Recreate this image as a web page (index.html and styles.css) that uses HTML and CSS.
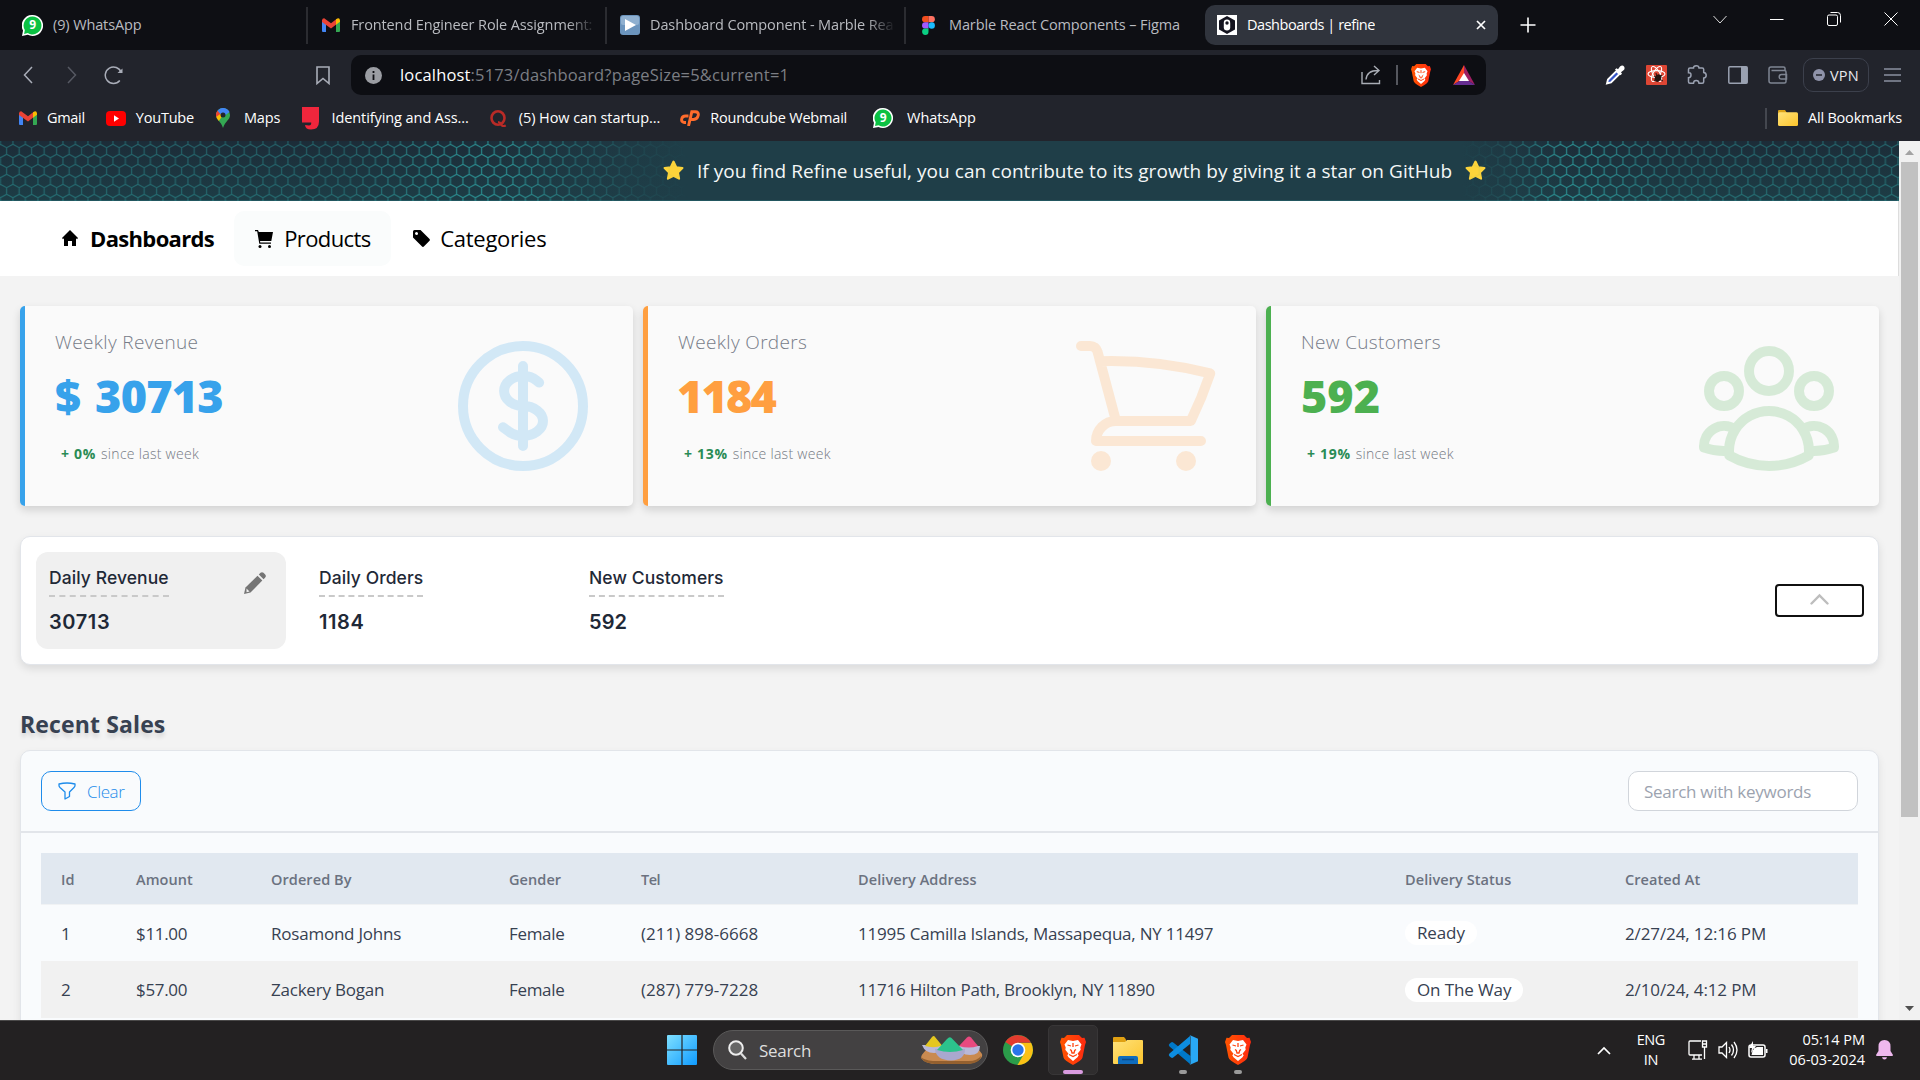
FILE: index.html
```html
<!DOCTYPE html>
<html lang="en">
<head>
<meta charset="utf-8">
<title>Dashboards | refine</title>
<link rel="stylesheet" href="styles.css">
</head>
<body>
<svg class="defs" aria-hidden="true">
  <defs>
    <linearGradient id="folder-g" x1="0" y1="0" x2="1" y2="1"><stop offset="0" stop-color="#ffe27a"/><stop offset="1" stop-color="#fcc42c"/></linearGradient>
    <linearGradient id="win-g" x1="0" y1="0" x2="1" y2="1"><stop offset="0" stop-color="#7fe0ff"/><stop offset="1" stop-color="#0f9bff"/></linearGradient>
    <linearGradient id="brave-g" x1="0" y1="0" x2="1" y2="0"><stop offset="0" stop-color="#ff5500"/><stop offset="1" stop-color="#ff2a10"/></linearGradient>
    <pattern id="hex" width="12.5" height="20" patternUnits="userSpaceOnUse" x="0.4">
      <path d="M0 0V3.33L6.25 6.67 12.5 3.33V0M6.25 6.67V13.33L0 16.67V20M6.25 13.33L12.5 16.67V20" fill="none" stroke="#2ea0a1" stroke-width="1.2"/>
    </pattern>
  </defs>
  <symbol id="gmail" viewBox="0 0 18 14"><path d="M0 2v11a1 1 0 0 0 1 1h3V5z" fill="#4285f4"/><path d="M18 2v11a1 1 0 0 1-1 1h-3V5z" fill="#34a853"/><path d="M0 2.200Q.3.200 2.200.3L9 5.300 14.500 1v5.300L9 10.500 0 4z" fill="#ea4335"/><path d="M14 1.300Q17.500-1 18 2.200V3.800L14 6.800z" fill="#fbbc04"/></symbol>
  <symbol id="whatsapp" viewBox="0 0 20 20"><path d="M10 0a10 10 0 1 1-4.500 18.900L0 20l1-5.200A10 10 0 0 1 10 0z" fill="#fff"/><path d="M10 1.500A8.500 8.500 0 1 1 5.500 17.200L2 18l.7-3.700A8.500 8.500 0 0 1 10 1.500z" fill="#0bc143"/></symbol>
  <symbol id="brave" viewBox="0 0 26 30"><path d="M7 0h12l3 3 2.500-.3L26 7l-1 3-2.500 12.500Q22 25 13 30 4 25 3.500 22.500L1 10 0 7l1.500-4.300L4 3z" fill="url(#brave-g)"/><path d="M8 5l5 1 5-1 3.500 4.500-1.200 3 .4 2.300-3.200 4 1.200 1.500-1.200 2L13 26l-4.500-3.700-1.200-2 1.200-1.500-3.200-4 .4-2.300-1.200-3z" fill="#fff"/><path d="M13 8v4M7.500 10l3.500 1M18.500 10l-3.500 1M10 14.500l1.300 1 .7 2.500h2l.7-2.500 1.300-1M9 19.500l4 2 4-2" stroke="#ff4410" stroke-width="1.300" fill="none"/></symbol>
  <symbol id="star" viewBox="0 0 20 20"><path d="M10 1.500l2.600 5.400 5.900.8-4.300 4.100 1.100 6L10 15l-5.300 2.800 1.100-6L1.500 7.700l5.900-.8z" fill="#fdd43a" stroke="#fdd43a" stroke-width="2" stroke-linejoin="round"/></symbol>
</svg>

<header class="tabs">
  <div class="tab"><span class="badge-icon"><svg width="21" height="21"><use href="#whatsapp"/></svg><b>9</b></span><span class="tab-text">(9) WhatsApp</span></div>
  <div class="tab"><svg width="18" height="14"><use href="#gmail"/></svg><span class="tab-text fade">Frontend Engineer Role Assignment:</span></div>
  <div class="tab tab-play"><svg width="20" height="20" viewBox="0 0 20 20"><rect width="20" height="20" rx="3" fill="#6b94bd"/><rect x="1" y="1" width="18" height="9" rx="2" fill="#8fb0d0"/><path d="M5 4l11 6-11 6z" fill="#fff"/></svg><span class="tab-text fade">Dashboard Component - Marble Rea</span></div>
  <div class="tab tab-figma"><svg width="13" height="19" viewBox="0 0 13 19"><path d="M3.200 0H6.500v6.300H3.200a3.150 3.150 0 0 1 0-6.300z" fill="#f24e1e"/><path d="M6.500 0h3.200a3.150 3.150 0 0 1 0 6.300H6.500z" fill="#ff7262"/><path d="M3.200 6.300H6.500v6.300H3.200a3.150 3.150 0 0 1 0-6.300z" fill="#a259ff"/><circle cx="9.700" cy="9.500" r="3.200" fill="#1abcfe"/><path d="M3.200 12.600H6.500v3.200a3.200 3.200 0 1 1-3.300-3.200z" fill="#0acf83"/></svg><span class="tab-text">Marble React Components – Figma</span></div>
  <div class="tab active"><svg width="20" height="20" viewBox="0 0 20 20"><rect width="20" height="20" fill="#fff"/><path d="M10 1l8 4.500v9L10 19l-8-4.500v-9z" fill="#14141f"/><rect x="6.800" y="4.500" width="6.400" height="11" rx="3.200" fill="#fff"/><circle cx="10" cy="8" r="1.700" fill="#14141f"/></svg><span class="tab-text">Dashboards | refine</span><svg class="tab-close" width="10" height="10" viewBox="0 0 10 10"><path d="M1 1l8 8M9 1L1 9" stroke="#fff" stroke-width="1.700"/></svg></div>
  <svg class="new-tab" width="16" height="16" viewBox="0 0 16 16"><path d="M8 .5v15M.5 8h15" stroke="#fff" stroke-width="1.600"/></svg>
  <div class="win-controls">
    <svg width="14" height="14" viewBox="0 0 14 14"><path d="M.5 4l6.500 7 6.500-7" fill="none" stroke="#ddd"/></svg>
    <svg width="14" height="14" viewBox="0 0 14 14"><path d="M0 7.500h13.500" stroke="#fff"/></svg>
    <svg width="14" height="14" viewBox="0 0 14 14"><rect x=".5" y="3" width="10" height="10.500" rx="1.500" fill="none" stroke="#fff"/><path d="M3.500.5h7a3 3 0 0 1 3 3v7" fill="none" stroke="#fff"/></svg>
    <svg width="14" height="14" viewBox="0 0 14 14"><path d="M.5.5l13 13M13.500.5l-13 13" stroke="#fff"/></svg>
  </div>
</header>

<div class="toolbar">
  <svg width="10" height="18" viewBox="0 0 10 18"><path d="M9 1L1.500 9 9 17" fill="none" stroke="#a9adb8" stroke-width="1.500"/></svg>
  <svg class="fwd" width="10" height="18" viewBox="0 0 10 18"><path d="M1 1l7.500 8L1 17" fill="none" stroke="#565963" stroke-width="1.500"/></svg>
  <svg class="reload" width="20" height="20" viewBox="0 0 20 20"><path d="M15.800 15.500A8.200 8.200 0 1 1 17.200 7.500" fill="none" stroke="#a9adb8" stroke-width="1.500"/><path d="M13.500 8l5 0V3.500z" fill="#a9adb8"/></svg>
  <svg class="bm" width="14" height="19" viewBox="0 0 14 19"><path d="M1 1h12v16.500l-6-5-6 5z" fill="none" stroke="#a9adb8" stroke-width="1.600"/></svg>
  <div class="address">
    <svg width="17" height="17" viewBox="0 0 17 17"><circle cx="8.500" cy="8.500" r="8.500" fill="#9b9da3"/><path d="M8.500 7.500v5.500M8.500 4v2" stroke="#0d0e13" stroke-width="1.800"/></svg>
    <span class="url"><b>localhost</b>:5173/dashboard?pageSize=5&amp;current=1</span>
    <svg class="share" width="20" height="20" viewBox="0 0 20 20"><path d="M1 7v11.500h17.500V15" fill="none" stroke="#a9adb5" stroke-width="1.400"/><path d="M5 14.500C5.500 8.500 9 5.500 17 5.500M13 1l5 4.500-5 4.500" fill="none" stroke="#a9adb5" stroke-width="1.400"/></svg>
    <i class="address-sep"></i>
    <svg width="20" height="23"><use href="#brave"/></svg>
    <svg class="bat" width="22" height="20" viewBox="0 0 22 20"><path d="M11 0L0 20l11-7z" fill="#ff4724"/><path d="M11 0l11 20-11-7z" fill="#9e1f63"/><path d="M0 20h22l-11-7z" fill="#662d91"/><path d="M11 8l5 8H6z" fill="#fff"/></svg>
  </div>
  <div class="extensions">
    <svg width="20" height="20" viewBox="0 0 20 20"><path d="M2 18.500l1-4L11.500 6l3 3L6 17.500z" fill="#3657c9" stroke="#fff" stroke-width="1.900"/><path d="M10 4.500l1.500-1.200 1.500 1 2-2.800q2.500-2.300 4.200.2 1 2-.7 3.600l-2.500 2 1 1.500-1.500 1.500z" fill="#fff"/></svg>
    <svg width="21" height="20" viewBox="0 0 21 20"><rect width="21" height="20" rx="1" fill="#de4634"/><g fill="none" stroke="#fff" stroke-width="1.100"><ellipse cx="10.500" cy="9" rx="8.500" ry="3.400"/><ellipse cx="10.500" cy="9" rx="8.500" ry="3.400" transform="rotate(60 10.500 9)"/><ellipse cx="10.500" cy="9" rx="8.500" ry="3.400" transform="rotate(120 10.500 9)"/></g><ellipse cx="12" cy="13" rx="3" ry="4" transform="rotate(35 12 13)" fill="#26130f"/><path d="M8 11l9 5M10 8l2 9M8 16l8-6" stroke="#26130f"/></svg>
    <svg width="20" height="20" viewBox="0 0 20 20"><path d="M1.500 4.500q0-1.500 1.500-1.500h3.500q0-2.200 2.700-2.200T12 3h3.200q1.500 0 1.500 1.500v3q2.500.3 2.500 2.800t-2.500 2.800v3.600q0 1.500-1.500 1.500H12q-.2-2.700-2.800-2.700T6.500 18.200H3q-1.500 0-1.500-1.500v-4Q4 12.500 4 10T1.500 7.700z" fill="none" stroke="#9aa1b1" stroke-width="1.500"/></svg>
    <svg width="20" height="18" viewBox="0 0 20 18"><rect x=".8" y=".8" width="18.400" height="16.400" rx="1" fill="none" stroke="#9aa1b1" stroke-width="1.500"/><path d="M13 1h6v16h-6z" fill="#9aa1b1"/></svg>
    <svg width="20" height="18" viewBox="0 0 20 18"><path d="M17 4.500V2.300Q17 1 15.500 1H3Q1 1 1 3v12q0 2 2 2h13.500q1.500 0 1.500-1.500V6q0-1.500-1.500-1.500H3.500M18.500 8.500h-5q-2.300 0-2.300 2.300t2.300 2.200h5z" fill="none" stroke="#7f8592" stroke-width="1.500"/></svg>
  </div>
  <div class="vpn"><svg width="12" height="12" viewBox="0 0 12 12"><circle cx="6" cy="6" r="6" fill="#8f93a9"/><path d="M3 6h6" stroke="#22242c" stroke-width="1.500"/></svg><span>VPN</span></div>
  <svg class="menu" width="17" height="14" viewBox="0 0 17 14"><path d="M0 1h17M0 7h17M0 13h17" stroke="#8b90a0" stroke-width="1.500"/></svg>
</div>

<div class="bookmarks">
  <a class="bk bk-gmail"><svg width="18" height="14"><use href="#gmail"/></svg><span>Gmail</span></a>
  <a class="bk bk-yt"><svg width="20" height="15" viewBox="0 0 20 15"><rect width="20" height="15" rx="4" fill="#f00"/><path d="M8 4.200l5 3.300-5 3.300z" fill="#fff"/></svg><span>YouTube</span></a>
  <a class="bk bk-maps"><svg width="14" height="20" viewBox="0 0 14 20"><path d="M7 0a7 7 0 0 1 7 7c0 5-5 6-7 13C5 13 0 12 0 7a7 7 0 0 1 7-7z" fill="#34a853"/><path d="M1.500 2.800L7 7 2.800 13Q0 10 0 7z" fill="#fbbc04"/><path d="M1.500 2.800L5 5.500 0 9q-.5-4 1.500-6.200z" fill="#ea4335"/><path d="M1.500 2.800A7 7 0 0 1 13.500 4L7 9z" fill="#4285f4"/><circle cx="7" cy="7" r="2.500" fill="#22242c"/></svg><span>Maps</span></a>
  <a class="bk bk-id"><svg width="17" height="23" viewBox="0 0 17 23"><path d="M0 0h17v14.500q0 8-8 8-5.500 0-6-4.500l4 .5q2.500 0 2.200-3H0z" fill="#f0263c"/></svg><span>Identifying and Ass...</span></a>
  <a class="bk bk-q"><svg width="17" height="17" viewBox="0 0 17 17"><ellipse cx="8" cy="8" rx="6.500" ry="6.700" fill="none" stroke="#b92b27" stroke-width="2.600"/><path d="M8 12q2 0 3.200 2.500t4.600 1" fill="none" stroke="#b92b27" stroke-width="2.200"/></svg><span>(5) How can startup...</span></a>
  <a class="bk bk-cp"><svg width="20" height="16" viewBox="0 0 20 16"><path d="M8.500 6H5.500Q2.300 6 1.700 9t2.600 3.500H6" fill="none" stroke="#ff6c2c" stroke-width="2.900"/><path d="M8.500 16L11.800 1.800h3.400Q19 1.800 18.200 5.500t-4.500 4H11" fill="none" stroke="#ff6c2c" stroke-width="2.900"/></svg><span>Roundcube Webmail</span></a>
  <a class="bk bk-wa"><span class="badge-icon"><svg width="20" height="20"><use href="#whatsapp"/></svg><b>9</b></span><span>WhatsApp</span></a>
  <a class="bk bk-all"><svg width="20" height="16" viewBox="0 0 20 16"><path d="M0 1q0-1 1-1h6l2 3v12H1q-1 0-1-1z" fill="#dda318"/><rect y="2.200" width="20" height="13.800" rx="1.500" fill="url(#folder-g)"/></svg><span>All Bookmarks</span></a>
</div>

<div class="viewport">
  <main class="page">
    <section class="banner">
      <svg class="hexes hexes-left" width="690" height="60"><rect width="690" height="60" fill="url(#hex)"/></svg>
      <svg class="hexes hexes-right" width="439" height="60"><rect width="450" height="60" fill="url(#hex)"/></svg>
      <div class="banner-text"><svg width="21" height="21"><use href="#star"/></svg><span>If you find Refine useful, you can contribute to its growth by giving it a star on GitHub</span><svg width="21" height="21"><use href="#star"/></svg></div>
    </section>

    <nav class="nav">
      <a class="nav-item current"><svg width="16" height="17" viewBox="0 0 16 17"><path d="M8 0l8 8-1 1.200-1-.9V16H10v-5H6v5H2V8.300l-1 .9L0 8z"/></svg><span>Dashboards</span></a>
      <a class="nav-item hover"><svg width="18" height="18" viewBox="0 0 18 18"><path d="M0 0h3l.8 2H18l-1.700 9H5l.3 1.500H16v1.200H4.300L2.200 1.300H0z"/><circle cx="5" cy="16.500" r="1.500"/><circle cx="14.500" cy="16.500" r="1.500"/></svg><span>Products</span></a>
      <a class="nav-item cats"><svg width="17" height="17" viewBox="0 0 17 17"><path fill-rule="evenodd" d="M0 1.500Q0 0 1.500 0H7.500L16.300 8.700q1.200 1.200 0 2.300l-5.200 5.300q-1.200 1.200-2.300 0L0 7.500zM3.500 2a1.500 1.500 0 1 0 .01 3 1.500 1.500 0 0 0 0-3z"/></svg><span>Categories</span></a>
    </nav>

    <section class="cards">
      <article class="card blue">
        <div><h3>Weekly Revenue</h3><strong>$ 30713</strong><p><b>+ 0%</b><span>since last week</span></p></div>
        <svg viewBox="0 0 24 24"><path d="M12 6v12m-3-2.818l.879.659c1.171.879 3.070.879 4.242 0 1.172-.879 1.172-2.303 0-3.182C13.536 12.219 12.768 12 12 12c-.725 0-1.450-.22-2.003-.659-1.106-.879-1.106-2.303 0-3.182s2.900-.879 4.006 0l.415.33M21 12a9 9 0 11-18 0 9 9 0 0118 0z"/></svg>
      </article>
      <article class="card orange">
        <div><h3>Weekly Orders</h3><strong>1184</strong><p><b>+ 13%</b><span>since last week</span></p></div>
        <svg viewBox="0 0 24 24"><path d="M2.250 3h1.386c.51 0 .955.343 1.087.835l.383 1.437M7.500 14.250a3 3 0 00-3 3h15.750m-12.750-3h11.218c1.121-2.300 2.100-4.684 2.924-7.138a60.114 60.114 0 00-16.536-1.840M7.500 14.250L5.106 5.272M6 20.250a.75.75 0 11-1.500 0 .75.75 0 011.500 0zm12.750 0a.75.75 0 11-1.500 0 .75.75 0 011.500 0z"/></svg>
      </article>
      <article class="card green">
        <div><h3>New Customers</h3><strong>592</strong><p><b>+ 19%</b><span>since last week</span></p></div>
        <svg viewBox="0 0 24 24"><path d="M18 18.720a9.094 9.094 0 003.741-.479 3 3 0 00-4.682-2.720m.94 3.198l.001.031c0 .225-.012.447-.037.666A11.944 11.944 0 0112 21c-2.170 0-4.207-.576-5.963-1.584A6.062 6.062 0 016 18.719m12 0a5.971 5.971 0 00-.941-3.197m0 0A5.995 5.995 0 0012 12.750a5.995 5.995 0 00-5.058 2.772m0 0a3 3 0 00-4.681 2.720 8.986 8.986 0 003.740.477m.94-3.197a5.971 5.971 0 00-.94 3.197M15 6.750a3 3 0 11-6 0 3 3 0 016 0zm6 3a2.250 2.250 0 11-4.500 0 2.250 2.250 0 014.500 0zm-13.500 0a2.250 2.250 0 11-4.500 0 2.250 2.250 0 014.500 0z"/></svg>
      </article>
    </section>

    <section class="daily">
      <div class="metric selected"><h4>Daily Revenue</h4><strong>30713</strong><svg width="22" height="22" viewBox="0 0 22 22"><path d="M0 22l1.500-6.500L13.500 3.700l4.800 4.800L6.500 20.500z" fill="#757575"/><path d="M14.800 2.500l1.700-1.700q1.500-1.300 3 0l1.700 1.700q1.300 1.500 0 3l-1.600 1.800z" fill="#757575"/><path d="M2.500 16.500l3 3-3 .8z" fill="#f0f0f0"/></svg></div>
      <div class="metric"><h4>Daily Orders</h4><strong>1184</strong></div>
      <div class="metric"><h4>New Customers</h4><strong class="plain">592</strong></div>
      <button class="collapse"><svg width="19" height="12" viewBox="0 0 19 12"><path d="M1.500 10.500l8-8 8 8" fill="none" stroke="#bdbdbd" stroke-width="2.400" stroke-linecap="round"/></svg></button>
    </section>

    <h2 class="section-title">Recent Sales</h2>

    <section class="sales">
      <div class="filters">
        <button class="clear"><svg width="18" height="18" viewBox="0 0 18 18"><path d="M1 2Q9 0 17 2v1.500q0 1-1 2L11.500 10v4.500L7 17v-7L2 5.500q-1-1-1-2z" fill="none" stroke="#1f8ceb" stroke-width="1.300" stroke-linejoin="round"/></svg><span>Clear</span></button>
        <div class="search"><span>Search with keywords</span></div>
      </div>
      <div class="table">
        <div class="row head"><span>Id</span><span>Amount</span><span>Ordered By</span><span>Gender</span><span class="tel">Tel</span><span>Delivery Address</span><span>Delivery Status</span><span>Created At</span></div>
        <div class="row body"><span>1</span><span>$11.00</span><span>Rosamond Johns</span><span>Female</span><span>(211) 898-6668</span><span>11995 Camilla Islands, Massapequa, NY 11497</span><span><em>Ready</em></span><span>2/27/24, 12:16 PM</span></div>
        <div class="row body alt"><span>2</span><span>$57.00</span><span>Zackery Bogan</span><span>Female</span><span>(287) 779-7228</span><span>11716 Hilton Path, Brooklyn, NY 11890</span><span><em>On The Way</em></span><span>2/10/24, 4:12 PM</span></div>
      </div>
    </section>
  </main>
  <div class="scrollbar"><svg width="9" height="5" viewBox="0 0 9 5"><path d="M4.500 0L9 5H0z" fill="#a3a3a3"/></svg><i></i><svg width="9" height="5" viewBox="0 0 9 5"><path d="M0 0h9L4.500 5z" fill="#505050"/></svg></div>
</div>

<footer class="taskbar">
  <div class="launcher">
    <svg width="30" height="30" viewBox="0 0 30 30"><path d="M1 0h13.400v14.400H0V1q0-1 1-1zM15.600 0H29q1 0 1 1v13.400H15.600zM0 15.600h14.400V30H1q-1 0-1-1zM15.600 15.600H30V29q0 1-1 1H15.600z" fill="url(#win-g)"/></svg>
    <div class="task-search"><svg width="19" height="20" viewBox="0 0 19 20"><circle cx="8" cy="8" r="6.800" fill="#666" stroke="#eee" stroke-width="2"/><path d="M13 13.500l5 5.500" stroke="#ddd" stroke-width="2.200"/></svg><span>Search</span>
      <svg class="bowls" width="63" height="30" viewBox="0 0 63 30"><path d="M6 15h53l3 4q1 3-3 6-5 4-15 4H18Q5 29 1 23q0-3 5-8z" fill="#c98a50"/><path d="M1 22q3 3 12 4h36q8 0 12-5-1 8-16 8H18Q3 29 1 22z" fill="#94602f"/><path d="M2 10h21q0 8-9 8T2 10zM38 11h22q0 9-10 9T38 11z" fill="#b9b8d8"/><path d="M5 11L12 2q2-2 3 0l7 8.500q-8 3-17 .5z" fill="#e4c71f"/><path d="M39 11l8-8.500q2-2 4 0l7 8.500q-9 3-19 0z" fill="#e8497f"/><path d="M15 14h30q0 11-14 11.500Q16 25 15 14z" fill="#a9a8cf"/><path d="M17 15l10-11q3-3.500 5.500 0L43 15q-13 4-26 0z" fill="#2cc28c"/></svg>
    </div>
    <div class="app"><svg width="30" height="30" viewBox="0 0 30 30"><circle cx="15" cy="15" r="15" fill="#2b9c4a"/><path d="M15 15L2.300 7A15 15 0 0 1 28 7.800H15z" fill="#e33b2e"/><path d="M15 8h13.200A15 15 0 0 1 14.500 30L21.500 18z" fill="#fbc116"/><circle cx="15" cy="15" r="7.300" fill="#fff"/><circle cx="15" cy="15" r="5.700" fill="#2a75ea"/></svg></div>
    <div class="app open"><svg width="26" height="30"><use href="#brave"/></svg><i></i></div>
    <div class="app"><svg width="30" height="27" viewBox="0 0 30 27"><path d="M0 1q0-1 1-1h10l2 2.500v6H0z" fill="#e0a012"/><path d="M0 5h12l2-2h15q1 0 1 1v22q0 1-1 1H1q-1 0-1-1z" fill="url(#folder-g)"/><path d="M5 27v-6q0-2 2-2h16q2 0 2 2v6z" fill="#0f6cbd"/><path d="M9 22.500h12" stroke="#0b4a8a" stroke-width="1.500"/></svg></div>
    <div class="app"><svg width="30" height="30" viewBox="0 0 30 30"><path d="M22 29L1.500 11.500q-1.500-1.500 0-2.800L3 7.500q1.200-.9 2.200 0L22.500 21z" fill="#0078c8"/><path d="M22 1v8L5.200 22.500q-1 .9-2.200 0l-1.500-1.200q-1.500-1.300 0-2.800z" fill="#0d8de0"/><path d="M21.500 0L30 3.800v22.400L21.500 30q1-.5 1-2V2q0-1.500-1-2z" fill="#29a8f5"/></svg><i class="dot"></i></div>
    <div class="app"><svg width="26" height="30"><use href="#brave"/></svg><i class="dot"></i></div>
  </div>
  <div class="tray">
    <svg class="up" width="14" height="9" viewBox="0 0 14 9"><path d="M1 8l6-6 6 6" fill="none" stroke="#fff" stroke-width="1.700"/></svg>
    <div class="lang"><span>ENG</span><span>IN</span></div>
    <svg width="20" height="20" viewBox="0 0 20 20"><path d="M13 1H2Q1 1 1 2v12q0 1 1 1h12M6 15v4M11 15v4M4 19.200h10" fill="none" stroke="#fff" stroke-width="1.300"/><path d="M14.500 1h4v6h-4zM16.500 7v12M14.500 4h4" fill="none" stroke="#fff" stroke-width="1.300"/></svg>
    <svg width="20" height="18" viewBox="0 0 20 18"><path d="M1 6h3l4.500-4.500v15L4 12H1z" fill="none" stroke="#fff" stroke-width="1.300"/><path d="M11 6q2 3 0 6M13.500 3.500q4 5.500 0 11M16 1q6 8 0 16" fill="none" stroke="#fff" stroke-width="1.300"/></svg>
    <svg width="20" height="18" viewBox="0 0 20 18"><rect x="1" y="4" width="16" height="12" rx="2" fill="none" stroke="#fff" stroke-width="1.500"/><path d="M5 8l4-2h6v8H3.500zM18 8h1.500v4H18zM5 0L1 7h3l-1 5 5-7H5z" fill="#fff"/></svg>
    <div class="clock"><span>05:14 PM</span><span>06-03-2024</span></div>
    <svg class="bell" width="17" height="20" viewBox="0 0 17 20"><path d="M8.500 0q6 0 6 6.500V11l2.500 4q0 1-1 1H1q-1 0-1-1l2.500-4V6.500Q2.500 0 8.500 0zM6 17.300h5Q10.500 19.500 8.500 19.500T6 17.300z" fill="#eeb8ee"/></svg>
  </div>
</footer>
</body>
</html>
```
FILE: styles.css
```css
* { box-sizing: border-box; }
body { margin: 0; width: 1920px; height: 1080px; overflow: hidden; display: flex; flex-direction: column; font-family: "Open Sans", "Noto Sans", sans-serif; background: #f3f3f3; }
svg { display: block; flex: none; }
i { font-style: normal; }
span, i, h3, h4, strong { white-space: nowrap; }
.defs { position: absolute; width: 0; height: 0; }

/* window tabs */
.tabs { height: 50px; flex: none; background: #0e0f14; display: flex; align-items: center; color: #b9bbc0; font-size: 14.500px; letter-spacing: -.12px; }
.tab { width: 299px; height: 37px; padding-left: 14px; display: flex; align-items: center; gap: 11px; border-right: 2px solid #2b2c31; }
.tab:first-child { width: 308px; padding-left: 22px; gap: 10px; }
.tab-text { display: block; width: 243px; padding-bottom: 2px; overflow: hidden; }
.fade { -webkit-mask-image: linear-gradient(90deg, #000 89%, transparent 101%); mask-image: linear-gradient(90deg, #000 89%, transparent 101%); }
.tab-play { padding-left: 13px; gap: 10px; }
.tab-figma { width: 299px; border: 0; gap: 14px; padding-left: 16px; }
.tab.active { width: 293px; height: 40px; padding: 0 12px; gap: 10px; border: 0; border-radius: 10px; background: #30343d; color: #fff; letter-spacing: -.47px; }
.active .tab-text { width: auto; }
.tab-close { margin-left: auto; }
.new-tab { margin-left: 22px; }
.win-controls { margin-left: auto; margin-right: 22px; margin-bottom: 13px; display: flex; gap: 43px; }
.badge-icon { position: relative; display: block; flex: none; }
.badge-icon b { position: absolute; inset: 0; text-align: center; font-size: 12px; line-height: 20px; color: #fff; }

/* toolbar */
.toolbar { height: 50px; flex: none; background: #22242c; display: flex; align-items: center; padding-left: 23px; }
.fwd { margin-left: 34px; }
.reload { margin-left: 27px; }
.bm { margin-left: 192px; }
.address { margin-left: 21px; width: 1135px; height: 40px; border-radius: 10px; background: #0d0e13; display: flex; align-items: center; padding: 0 11px 0 14px; }
.url { margin-left: 18px; padding-bottom: 2px; font-size: 16.500px; letter-spacing: .16px; color: #7c7e84; }
.url b { font-weight: 400; color: #fff; }
.share { margin-left: auto; }
.address-sep { width: 2px; height: 20px; margin: 0 13px 0 15px; background: #55575e; }
.bat { margin-left: 22px; }
.extensions { margin-left: 119px; width: 183px; display: flex; justify-content: space-between; align-items: center; }
.vpn { margin-left: 15px; width: 66px; height: 34px; border: 1px solid #3c404c; border-radius: 10px; display: flex; align-items: center; padding-left: 9px; gap: 5px; color: #e8e9ee; font-size: 14.500px; letter-spacing: .2px; }
.menu { margin-left: 15px; }

/* bookmarks */
.bookmarks { height: 41px; flex: none; background: #22242c; display: flex; align-items: center; padding: 0 18px 5px 19px; color: #fff; font-size: 14.500px; letter-spacing: -.08px; }
.bk { display: flex; align-items: center; gap: 10px; }
.bk > span:last-child { padding-bottom: 2px; }
.bk-gmail { letter-spacing: -.3px; }
.bk-yt { margin-left: 21px; letter-spacing: -.23px; }
.bk-maps { margin-left: 22px; gap: 14px; }
.bk-id { margin-left: 22px; gap: 12px; }
.bk-q { margin-left: 21px; gap: 12px; }
.bk-cp { margin-left: 20px; letter-spacing: -.19px; }
.bk-wa { margin-left: 26px; gap: 14px; }
.bk-all { margin-left: auto; border-left: 2px solid #44474f; padding-left: 11px; letter-spacing: -.2px; }

/* page area */
.viewport { height: 879px; flex: none; display: flex; overflow: hidden; }
.page { width: 1899px; height: 879px; overflow: hidden; }
.scrollbar { width: 21px; height: 879px; background: #f1f1f1; display: flex; flex-direction: column; align-items: center; padding: 9px 0; }
.scrollbar i { width: 17px; height: 655px; margin: 7px 0 auto; background: #c1c1c1; }

.banner { position: relative; height: 60px; background: linear-gradient(90deg, transparent 25%, #1f3e48 36%, #1f3e48 77%, transparent 83%), linear-gradient(#1c2c38, #1d3d46); border-bottom: 1px solid #22565f; padding-left: 250px; display: flex; justify-content: center; }
.banner-text { display: flex; align-items: center; gap: 13px; color: #f4f7f7; font-size: 19px; font-weight: 500; letter-spacing: .06px; }
.hexes { position: absolute; top: 0; }
.hexes-left { left: 0; opacity: .78; -webkit-mask-image: linear-gradient(90deg, rgba(0,0,0,.6), rgba(0,0,0,.55) 50%, #000 68%, #000 74%, rgba(0,0,0,.2) 92%, transparent); mask-image: linear-gradient(90deg, rgba(0,0,0,.6), rgba(0,0,0,.55) 50%, #000 68%, #000 74%, rgba(0,0,0,.2) 92%, transparent); }
.hexes-right { right: 0; opacity: .78; -webkit-mask-image: linear-gradient(90deg, transparent, rgba(0,0,0,.2) 8%, #000 22%, #000 30%, rgba(0,0,0,.6) 50%); mask-image: linear-gradient(90deg, transparent, rgba(0,0,0,.2) 8%, #000 22%, #000 30%, rgba(0,0,0,.6) 50%); }

.nav { height: 75px; background: #fff; border-right: 1px solid #ddd; display: flex; align-items: center; padding-left: 42px; color: #000; font-size: 22px; letter-spacing: -.6px; }
.nav-item { height: 55px; border-radius: 10px; padding: 0 20px; display: flex; align-items: center; gap: 12px; }
.nav-item span { padding-bottom: 2px; }
.nav-item.current { font-weight: 700; letter-spacing: -.65px; }
.nav-item.hover { background: #fafcfc; width: 157px; padding-left: 21px; gap: 11px; }
.nav-item.cats { letter-spacing: -.26px; gap: 10px; padding-left: 22px; }

/* weekly cards */
.cards { margin: 30px 20px 0; display: grid; grid-template-columns: repeat(3, 613px); gap: 10px; }
.card { height: 200px; border-left: 5px solid; border-radius: 5px; background: #fafafa; box-shadow: 0 4px 8px rgba(0,0,0,.14); padding: 20px 30px; display: flex; justify-content: space-between; }
.card > svg { width: 160px; height: 160px; fill: none; stroke: currentColor; stroke-width: 1.500; stroke-linecap: round; stroke-linejoin: round; opacity: .2; }
.blue { color: #37a2eb; }
.orange { color: #ff9f40; }
.green { color: #4cb050; }
.card h3 { margin: 0; height: 32px; font-size: 19px; line-height: 32px; font-weight: 300; letter-spacing: .33px; color: #777c88; }
.card strong { display: block; margin-top: 13px; font-size: 45px; line-height: 50px; font-weight: 800; }
.blue strong { letter-spacing: -.8px; word-spacing: 4px; }
.orange strong { margin-left: -1px; letter-spacing: -1.87px; }
.card p { margin: 21px 0 0 6px; display: flex; gap: 5px; font-size: 14px; line-height: 24px; letter-spacing: .29px; color: #747983; font-weight: 300; }
.card p b { color: #2a8c55; font-weight: 700; letter-spacing: .7px; }

/* daily metrics */
.daily { margin: 30px 20px 0; height: 129px; border: 1px solid #e2e5ea; border-radius: 10px; background: #fff; box-shadow: 0 4px 8px rgba(0,0,0,.1); padding: 15px 14px 15px 15px; display: flex; gap: 20px; align-items: center; font-family: Inter, sans-serif; color: #1f2937; }
.metric { position: relative; width: 250px; height: 97px; padding: 12px 13px; border-radius: 12px; }
.metric.selected { background: #f0f0f0; }
.metric h4 { display: inline-block; margin: 0; height: 33px; line-height: 27px; font-size: 17.500px; font-weight: 500; letter-spacing: .08px; border-bottom: 2px dashed #c9c9c9; }
.metric strong { display: block; margin-top: 11px; font-size: 20px; line-height: 28px; font-weight: 600; letter-spacing: .6px; }
.metric strong.plain { letter-spacing: .05px; }
.metric svg { position: absolute; right: 20px; top: 20px; }
.collapse { margin-left: auto; width: 89px; height: 33px; border: 2px solid #101010; border-radius: 4px; background: #fff; padding: 0 0 4px; display: flex; align-items: center; justify-content: center; }

.section-title { margin: 38px 20px 0; height: 42px; line-height: 42px; font-size: 23px; font-weight: 700; letter-spacing: .13px; color: #374151; text-shadow: 0 4px 4px rgba(0,0,0,.12); }

/* sales table */
.sales { margin: 5px 20px 0; height: 400px; border: 1px solid #e2e5ea; border-radius: 10px; background: #f9fbfd; box-shadow: 0 4px 8px rgba(0,0,0,.08); }
.filters { height: 82px; padding: 0 20px; border-bottom: 2px solid #e2e5ea; display: flex; justify-content: space-between; align-items: center; }
.clear { width: 100px; height: 40px; border: 1px solid #1f8ceb; border-radius: 10px; background: none; display: flex; align-items: center; gap: 11px; padding: 0 0 0 16px; font-family: inherit; font-size: 17px; font-weight: 300; letter-spacing: -.37px; color: #1f8ceb; }
.search { width: 230px; height: 40px; border: 1px solid #d1d5db; border-radius: 10px; background: #fff; display: flex; align-items: center; padding-left: 15px; font-size: 17px; letter-spacing: -.27px; color: #9ca3af; }
.table { margin: 20px 20px 0; }
.row { display: grid; grid-template-columns: 75px 135px 238px 132px 217px 547px 220px 1fr; height: 56px; align-items: center; font-size: 17px; letter-spacing: -.22px; color: #374151; }
.row > span { padding-left: 20px; }
.row.head { height: 52px; padding-top: 2px; background: #e1e8f0; border-bottom: 1px solid #f0f2f4; font-size: 14.500px; font-weight: 600; letter-spacing: .08px; color: #6b7280; }
.head .tel { letter-spacing: -.53px; }
.body > :nth-child(2), .body > :nth-child(4) { letter-spacing: -.33px; }
.body > :nth-child(5) { letter-spacing: 0; }
.body > :nth-child(8) { letter-spacing: -.12px; }
.row.alt { height: 57px; background: #f1f1f1; }
.row em { display: inline-block; height: 24px; line-height: 24px; border-radius: 12px; background: #fff; padding: 0 12px; font-style: normal; letter-spacing: -.12px; }

/* taskbar */
.taskbar { height: 60px; flex: none; background: #232122; border-top: 1px solid #4a4949; display: flex; justify-content: space-between; align-items: center; padding: 0 0 1px 667px; color: #fff; }
.launcher { display: flex; align-items: center; }
.task-search { margin-left: 16px; width: 275px; height: 40px; border-radius: 20px; border: 1px solid #5a5959; background: #434142; display: flex; align-items: center; padding: 0 4px 0 14px; gap: 12px; font-size: 17px; letter-spacing: -.3px; color: #dedede; }
.bowls { margin-left: auto; }
.app { position: relative; width: 50px; height: 50px; margin-left: 5px; border-radius: 5px; display: flex; align-items: center; justify-content: center; }
.app.open { background: #2f2d2e; border: 1px solid #383637; }
.app i { position: absolute; left: 14px; bottom: 0; width: 20px; height: 4px; border-radius: 2px; background: #d99be0; }
.app i.dot { left: 21px; bottom: 1px; width: 8px; background: #9a9a9a; }
.tray { display: flex; align-items: center; padding-right: 27px; font-size: 14.500px; line-height: 20px; }
.lang { margin: 0 23px 0 26px; display: flex; flex-direction: column; align-items: center; letter-spacing: -.4px; }
.tray > svg + svg { margin-left: 10px; }
.clock { margin-left: 18px; width: 79px; display: flex; flex-direction: column; align-items: flex-end; }
.bell { margin-left: 11px; }
```
